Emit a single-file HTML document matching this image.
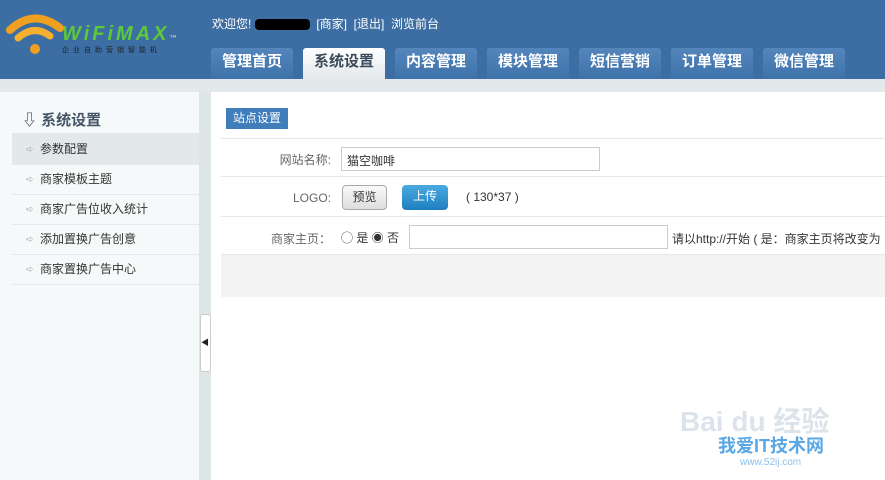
<!DOCTYPE html>
<html><head><meta charset="utf-8"><style>
*{margin:0;padding:0;box-sizing:border-box}
body{width:885px;height:480px;overflow:hidden;background:#fff;font-family:"Liberation Sans","Noto Sans CJK SC",sans-serif;font-size:12px;color:#333;position:relative}
.hd{position:absolute;left:0;top:0;width:885px;height:79px;background:#3d6ea3}
.strip{position:absolute;left:0;top:79px;width:885px;height:13px;background:#e3e8eb}
.side{position:absolute;left:0;top:92px;width:199px;height:388px;background:#f5f9f9}
.div{position:absolute;left:199px;top:92px;width:12px;height:388px;background:#dde5e5}
.tab{position:absolute;top:48px;height:31px;width:82px;text-align:center;line-height:28px;font-size:15px;font-weight:bold;color:#fff;background:linear-gradient(#5486bc,#3e72aa);border-radius:3px 3px 0 0}
.tab.on{background:linear-gradient(#fff,#e3e8eb);color:#3a4a5a}
.top{position:absolute;left:212px;top:15px;color:#fff;font-size:12px}
.menu div{position:absolute;left:12px;width:187px;height:30px;border-bottom:1px solid #e6eaea;line-height:29px;padding-left:28px;font-size:12px;color:#333}
.menu div:before{content:"➪";position:absolute;left:14px;color:#aaa;font-size:9px}
.row{position:absolute;left:221px;width:664px;border-bottom:1px solid #e8e8e8}
.lbl{position:absolute;text-align:right;width:110px;color:#666}
</style></head><body>
<div class="hd"></div>
<svg style="position:absolute;left:6px;top:12px" width="58" height="44" viewBox="0 0 58 44">
<path d="M4 18 Q28 -4 54 16" stroke="#f0a020" stroke-width="8" fill="none" stroke-linecap="round"/>
<path d="M12 26 Q28 12 44 24" stroke="#f5b030" stroke-width="7" fill="none" stroke-linecap="round"/>
<circle cx="29" cy="37" r="5" fill="#f0a020"/></svg>
<div style="position:absolute;left:62px;top:23px;color:#5cc83a;font-weight:bold;font-size:20px;letter-spacing:3px;font-style:italic">WiFiMAX<span style="font-size:7px;color:#ccc">™</span></div>
<div style="position:absolute;left:62px;top:45px;color:#222;font-size:7px;letter-spacing:4px">企业自助营销智能机</div>
<div class="top">欢迎您! <span style="display:inline-block;width:55px;height:11px;background:#000;border-radius:4px;vertical-align:middle"></span> &nbsp;[商家] &nbsp;[退出] &nbsp;浏览前台</div>
<div class="tab" style="left:211px">管理首页</div>
<div class="tab on" style="left:303px">系统设置</div>
<div class="tab" style="left:395px">内容管理</div>
<div class="tab" style="left:487px">模块管理</div>
<div class="tab" style="left:579px">短信营销</div>
<div class="tab" style="left:671px">订单管理</div>
<div class="tab" style="left:763px">微信管理</div>
<div class="strip"></div>
<div class="side"></div>
<div class="div"></div>
<div style="position:absolute;left:200px;top:314px;width:11px;height:58px;background:#fff;border:1px solid #ccc;border-radius:3px"></div>
<div style="position:absolute;left:201px;top:337px;font-size:8px;color:#222">◀</div>
<div style="position:absolute;left:22px;top:109px;font-size:15px;font-weight:bold;color:#445566">⇩ 系统设置</div>
<div style="position:absolute;left:12px;top:133px;width:187px;height:2px;background:#e3e8ea"></div>
<div class="menu">
<div style="top:135px;background:#e3e8ea">参数配置</div>
<div style="top:165px">商家模板主题</div>
<div style="top:195px">商家广告位收入统计</div>
<div style="top:225px">添加置换广告创意</div>
<div style="top:255px">商家置换广告中心</div>
</div>
<div style="position:absolute;left:226px;top:108px;width:62px;height:21px;background:#3f7dbb;color:#fff;line-height:21px;text-align:center">站点设置</div>
<div class="row" style="top:138px;height:0"></div>
<div class="row" style="top:139px;height:38px"><span class="lbl" style="left:0;top:12px">网站名称:</span>
<div style="position:absolute;left:120px;top:8px;width:259px;height:24px;border:1px solid #ccc;padding:4px 5px">猫空咖啡</div></div>
<div class="row" style="top:177px;height:40px"><span class="lbl" style="left:0;top:14px">LOGO:</span>
<div style="position:absolute;left:121px;top:8px;width:45px;height:25px;border:1px solid #aaa;border-radius:4px;background:linear-gradient(#fafafa,#ddd);text-align:center;line-height:23px">预览</div>
<div style="position:absolute;left:181px;top:8px;width:46px;height:25px;border-radius:4px;background:linear-gradient(#4aaae0,#1e7fc0);color:#fff;text-align:center;line-height:23px">上传</div>
<span style="position:absolute;left:245px;top:13px">( 130*37 )</span></div>
<div class="row" style="top:217px;height:38px"><span class="lbl" style="left:0;top:13px">商家主页：</span>
<span style="position:absolute;left:120px;top:12px">◯ 是 ◉ 否</span>
<div style="position:absolute;left:188px;top:8px;width:259px;height:24px;border:1px solid #ccc"></div>
<span style="position:absolute;left:451px;top:13px;white-space:nowrap">请以http://开始 ( 是：商家主页将改变为</span></div>
<div style="position:absolute;left:221px;top:255px;width:664px;height:42px;background:#f3f3f3"></div>
<div style="position:absolute;left:680px;top:400px;color:#dde3ea;font-size:28px;font-weight:bold">Bai du 经验</div>
<div style="position:absolute;left:718px;top:432px;color:#5aa7e6;font-size:18px;font-weight:bold">我爱IT技术网</div>
<div style="position:absolute;left:740px;top:457px;color:#8cc0ec;font-size:10px">www.52ij.com</div>
</body></html>
